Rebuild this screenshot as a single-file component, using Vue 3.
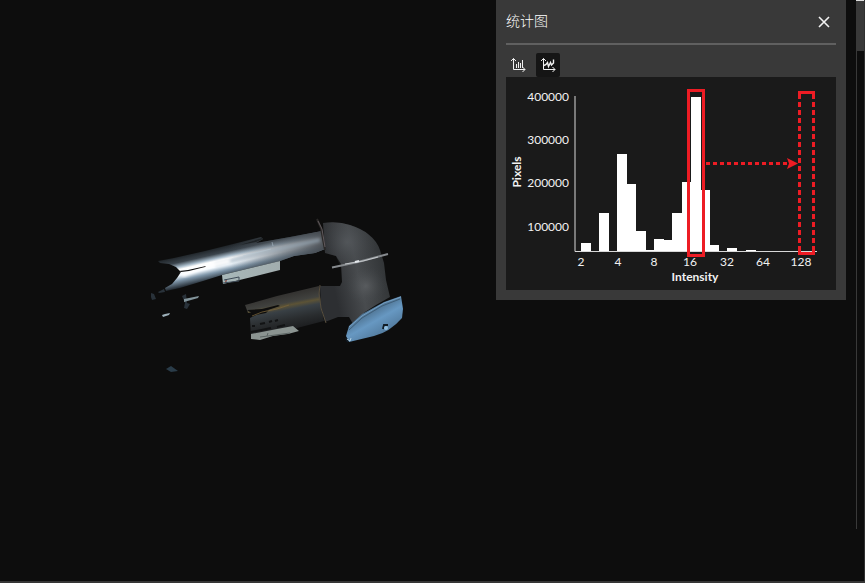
<script setup>
import { ref } from 'vue'

const open = ref(true)
const mode = ref('log')

const baseline = 174
const bars = [
  { x: 75, top: 166 },
  { x: 93, top: 136 },
  { x: 111, top: 77 },
  { x: 120, top: 107 },
  { x: 130, top: 154 },
  { x: 139, top: 173 },
  { x: 148, top: 162 },
  { x: 157, top: 163 },
  { x: 166, top: 136 },
  { x: 176, top: 105 },
  { x: 185, top: 20 },
  { x: 194, top: 113 },
  { x: 203, top: 168 },
  { x: 221, top: 171 },
  { x: 240, top: 173 },
]
const yTicks = [
  { y: 24, label: '400000' },
  { y: 67, label: '300000' },
  { y: 110, label: '200000' },
  { y: 154, label: '100000' },
]
const xTicks = [
  { x: 75, label: '2' },
  { x: 112, label: '4' },
  { x: 148, label: '8' },
  { x: 184, label: '16' },
  { x: 221, label: '32' },
  { x: 257, label: '64' },
  { x: 295, label: '128' },
]
</script>

<template>
  <div class="app">
    <main class="viewport">
      <svg class="scene" viewBox="0 0 856 581" preserveAspectRatio="xMinYMin slice" aria-hidden="true">
        <defs>
          <linearGradient id="tube" gradientUnits="userSpaceOnUse" x1="205" y1="250" x2="212" y2="281">
            <stop offset="0" stop-color="#1d2226" />
            <stop offset=".2" stop-color="#3b444c" />
            <stop offset=".34" stop-color="#a9bccb" />
            <stop offset=".42" stop-color="#ffffff" />
            <stop offset=".6" stop-color="#f2f9ff" />
            <stop offset=".76" stop-color="#7f96a9" />
            <stop offset="1" stop-color="#1c232a" />
          </linearGradient>
          <linearGradient id="tubeShade" gradientUnits="userSpaceOnUse" x1="230" y1="257" x2="325" y2="238">
            <stop offset="0" stop-color="#4c535a" stop-opacity="0" />
            <stop offset=".55" stop-color="#4c535a" stop-opacity=".6" />
            <stop offset="1" stop-color="#44484d" stop-opacity=".95" />
          </linearGradient>
          <linearGradient id="elbow" gradientUnits="userSpaceOnUse" x1="330" y1="270" x2="388" y2="257">
            <stop offset="0" stop-color="#2d2f32" />
            <stop offset=".45" stop-color="#484b4e" />
            <stop offset="1" stop-color="#2e3133" />
          </linearGradient>
          <radialGradient id="elbowGlow" gradientUnits="userSpaceOnUse" cx="347" cy="242" r="30">
            <stop offset="0" stop-color="#585c60" stop-opacity=".7" />
            <stop offset="1" stop-color="#404448" stop-opacity="0" />
          </radialGradient>
          <radialGradient id="bodyGlow" gradientUnits="userSpaceOnUse" cx="366" cy="286" r="20">
            <stop offset="0" stop-color="#66696c" stop-opacity=".6" />
            <stop offset="1" stop-color="#44484b" stop-opacity="0" />
          </radialGradient>
          <linearGradient id="lower" gradientUnits="userSpaceOnUse" x1="283" y1="295" x2="290" y2="331">
            <stop offset="0" stop-color="#343331" />
            <stop offset=".22" stop-color="#41423f" />
            <stop offset=".3" stop-color="#5c5336" />
            <stop offset=".42" stop-color="#394045" />
            <stop offset=".7" stop-color="#292c2e" />
            <stop offset="1" stop-color="#1a1b1d" />
          </linearGradient>
          <linearGradient id="cap" gradientUnits="userSpaceOnUse" x1="367" y1="309" x2="383" y2="337">
            <stop offset="0" stop-color="#486985" />
            <stop offset=".45" stop-color="#6798c2" />
            <stop offset="1" stop-color="#4f7698" />
          </linearGradient>
          <linearGradient id="plate" x1="0" y1="0" x2="1" y2="0">
            <stop offset="0" stop-color="#a8b8b9" />
            <stop offset="1" stop-color="#a2adae" />
          </linearGradient>
          <filter id="soft" x="-20%" y="-20%" width="140%" height="140%">
            <feGaussianBlur stdDeviation="1.5" />
          </filter>
        </defs>

        <path fill="url(#tube)" d="M158 261 174 258 205 251 261 237 263 239 256 243 290 237 322 231 325 249 315 253 294 256 280 261 222 275 203 281 180 288 166 291 165 288 172 284 177 278 181 272 176 267 169 264 160 263Z" />
        <path fill="url(#tubeShade)" d="M207 251 261 237 263 239 256 243 290 237 322 231 325 249 315 253 294 256 280 261 222 275 207 280Z" />
        <path fill="none" stroke="#9fb0c0" stroke-opacity=".6" stroke-width="4" filter="url(#soft)" d="M215 265 260 253 320 240" />
        <path fill="none" stroke="#ffffff" stroke-opacity=".9" stroke-width="5" filter="url(#soft)" d="m182 275 18-7 30-7" />
        <path fill="none" stroke="#b7cad8" stroke-opacity=".5" d="m272 242 1 4M243 256l28-7" />
        <path fill="#0d0d0d" d="m179 271 9-1 18-4-1 1-16 4-8 1Z" />
        <path fill="#1e2225" d="m240 245 22-7 1 1-7 3-16 3Z" />

        <path fill="url(#plate)" d="m222 275 58-14v9l-57 14Z" />
        <path fill="none" stroke="#3f4b57" d="M224 280l15-3v4l-16 2M226 279v4" />
        <path stroke="#aa5f54" d="m225 282 2-2" />

        <path fill="url(#elbow)" d="M323 223 Q338 221 350 225 Q362 229 368 234 Q377 241 380 250 L384 263 386 280 390 297 376 305 365 312 353 324 349 317 338 317 325 322 321 306 320 286 340 286 342 282 341 264 336 256 325 253Z" />
        <path fill="url(#elbowGlow)" d="M323 223 Q338 221 350 225 Q362 229 368 234 Q377 241 380 250 L381 258 340 266 336 256 325 253Z" />
        <path fill="url(#bodyGlow)" d="m342 266 42-9 2 23 4 17-25 15-12 12-8-8Z" />
        <path fill="none" stroke="#2a2827" stroke-width="2" d="m317 219 4 9 4 22" />
        <path fill="none" stroke="#6f666a" stroke-opacity=".8" d="m318 221 4 8 3 18" />
        <path fill="none" stroke="#868a8e" stroke-width="2" d="M332 267.500 358 262 388 254" />
        <path fill="none" stroke="#d3d7da" stroke-opacity=".8" d="m345 264 18-3 15-4" />
        <path stroke="#e4e8ec" stroke-width="2" d="m355 262 4-1" />

        <path fill="url(#lower)" d="m245 305 32-9 42-10 2 18 3 17-27 7-46 10-1-20 6-3 10-2 3-3-21 3Z" />
        <path fill="#0d0d0d" d="m247 310 15-1 16-4 2 1-9 3-12 4-5 3-5 1 4-3Z" />
        <path fill="none" stroke="#746039" stroke-opacity=".8" d="m252 316 10-4 15-3 12-4" />
        <path fill="none" stroke="#121314" stroke-width="2" d="m252 326 3 0m5-2 5-1m4-1 3-1m3 0 3-1m-27 12 20-4m6-1 8-2" />
        <path fill="#8b9491" d="m251 334 26-5 16-3 6 5-11 3-15 2-13 4-9-1Z" />
        <path fill="none" stroke="#5b6463" d="m268 333-1 3m-7 1 8-1 22-3" />
        <path fill="none" stroke="#554c3c" d="m320 285-1 9 2 14 5 15" />

        <path fill="url(#cap)" d="m401 296-17 6-22 12-13 12-3 10 3 6 25-6 Q390 332 402 318 L403 309Z" />
        <path fill="none" stroke="#3f5f79" d="m400 299-18 7-20 12-13 12" />
        <path fill="none" stroke="#749fc3" d="m401 297-17 6-22 13-13 11" />
        <path fill="none" stroke="#111b24" stroke-width="2" d="m383 329 1-4 4 0m-42 13 2 4" />
        <ellipse cx="386" cy="328" rx="2" ry="2" fill="#91bddd" />
        <path fill="none" stroke="#b2d0e2" d="m347 339 3 2 1-3" />

        <path fill="#29323a" d="m151 293 3 1 2 5-4 1-1-3Zm7-1 6-3 1 3-6 1Zm24 4 4-2 1 9 3 1-3 5-3-1 1-5Z" />
        <path fill="#82949b" d="m184 299 15-3-1 2-14 4Z" />
        <path fill="#9db0ba" d="m162 315 3-1 5-1-1 2-6 2Z" />
        <path fill="#2a3c49" d="m166 369 5-3 7 5-7 1Z" />
      </svg>

      <section v-if="open" class="panel" aria-labelledby="panel-title">
        <header class="panel-head">
          <h1 id="panel-title">统计图</h1>
          <button class="close" type="button" aria-label="关闭" @click="open = false">
            <svg width="12" height="12" viewBox="0 0 12 12"><path d="m1 1 10 10M11 1 1 11" /></svg>
          </button>
        </header>
        <div class="tools">
          <button type="button" aria-label="线性" :class="{ active: mode === 'linear' }" @click="mode = 'linear'">
            <svg width="16" height="16" viewBox="0 0 16 16">
              <path d="M3.500 1.500v11H15M1 4 3.500 1.500 6 4M12.500 10l2.500 2.500-2.500 2.500" />
              <path class="columns" d="M6.500 7v4M8.500 5v6M10.500 6v5M12.500 3v8" />
            </svg>
          </button>
          <button type="button" aria-label="对数" :class="{ active: mode === 'log' }" @click="mode = 'log'">
            <svg width="16" height="16" viewBox="0 0 16 16">
              <path d="M3.500 1.500v11H15M1 4 3.500 1.500 6 4M12.500 10l2.500 2.500-2.500 2.500" />
              <path class="trace" d="m4 8.500 2-1 1.500-2 1 4 2-4 1 2.500 2-2V2.500" />
            </svg>
          </button>
        </div>
        <svg class="chart" viewBox="0 0 330 213" role="img" aria-label="Pixels / Intensity">
          <g class="bars">
            <rect v-for="b in bars" :key="b.x" :x="b.x" :y="b.top" width="10" :height="baseline - b.top" />
          </g>
          <path class="axis" d="M69 19v155.500H311" />
          <g class="y-labels">
            <text v-for="t in yTicks" :key="t.label" x="63" :y="t.y">{{ t.label }}</text>
          </g>
          <g class="x-labels">
            <text v-for="t in xTicks" :key="t.label" :x="t.x" y="189">{{ t.label }}</text>
          </g>
          <text class="axis-title" x="189" y="204">Intensity</text>
          <text class="axis-title" transform="translate(15 95) rotate(-90)">Pixels</text>
          <g class="marks">
            <rect x="182.500" y="13.500" width="15" height="165" />
            <path d="M293.500 22v-6.500h14V22M293.500 171v5.500h14V171" />
            <path class="dash" d="M293.500 25v146M307.500 25v146" />
            <path class="dash-flow" d="M200 86.500h84" />
            <path class="head" d="m281 81 11 5.500-11 5.500 2-5.500Z" />
          </g>
        </svg>
      </section>
    </main>
    <aside class="rail"><div class="thumb"></div><div class="track"></div></aside>
  </div>
</template>

<style>
body {
  margin: 0;
  background: #0d0d0d;
}
</style>

<style scoped>
.app {
  display: flex;
  box-sizing: border-box;
  min-height: 100vh;
  border-bottom: 2px solid #363636;
  background: #0d0d0d;
  color: #f2f2f2;
  font-family: Lato, "Noto Sans CJK SC", sans-serif;
}
.viewport {
  position: relative;
  flex: 1;
  overflow: hidden;
}
.scene {
  display: block;
  width: 100%;
}
.panel {
  position: absolute;
  top: 0;
  right: 10px;
  box-sizing: border-box;
  width: 350px;
  padding: 0 10px 10px;
  background: #393939;
}
.panel-head {
  display: flex;
  align-items: center;
  justify-content: space-between;
  height: 43px;
  border-bottom: 2px solid #606060;
}
h1 {
  margin: 0;
  padding-bottom: 4px;
  color: #ffffff;
  font: 300 14px/20px "Noto Sans CJK SC", sans-serif;
}
button {
  display: grid;
  place-items: center;
  width: 24px;
  height: 24px;
  padding: 0;
  border: 0;
  border-radius: 2px;
  background: transparent;
  color: #f2f2f2;
  cursor: pointer;
}
button svg {
  fill: none;
  stroke: currentColor;
  stroke-width: 1;
}
.close svg {
  stroke-width: 1.6;
}
.trace {
  stroke-width: 1.4;
}
.active {
  background: #151515;
}
.tools {
  display: flex;
  gap: 6px;
  padding-top: 8px;
}
.chart {
  display: block;
  width: 100%;
  background: #1a1a1a;
  fill: #f2f2f2;
  font-size: 12px;
}
.bars {
  fill: #ffffff;
}
.axis {
  fill: none;
  stroke: #d8d8d8;
  stroke-width: 1;
}
.y-labels {
  text-anchor: end;
}
.x-labels,
.axis-title {
  text-anchor: middle;
}
.axis-title {
  font-weight: 700;
}
.marks {
  fill: none;
  stroke: #ed1c24;
  stroke-width: 3;
}
.dash {
  stroke-dasharray: 5 3;
}
.dash-flow {
  stroke-dasharray: 4 3;
}
.head {
  fill: #ed1c24;
  stroke: none;
}
.rail {
  display: flex;
  flex-direction: column;
  box-sizing: border-box;
  width: 9px;
  border-right: 1px solid #303030;
}
.thumb {
  height: 50px;
  border-top: 1px solid #e0e0e0;
  background: #393939;
}
.track {
  flex: 1;
  margin-bottom: 52px;
  border-left: 1px solid #393939;
}
</style>
